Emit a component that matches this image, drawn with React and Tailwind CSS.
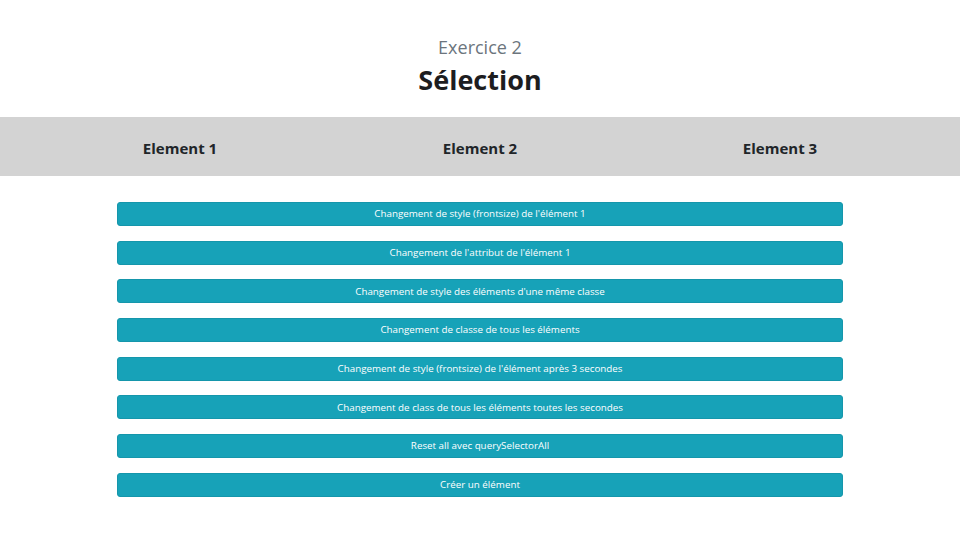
export default function App() {
  const actions = [
    "Changement de style (frontsize) de l'élément 1",
    "Changement de l'attribut de l'élément 1",
    "Changement de style des éléments d'une même classe",
    "Changement de classe de tous les éléments",
    "Changement de style (frontsize) de l'élément après 3 secondes",
    "Changement de class de tous les éléments toutes les secondes",
    "Reset all avec querySelectorAll",
    "Créer un élément",
  ];

  return (
    <div className="min-h-[539px] bg-white font-['Open_Sans',sans-serif] text-[#212529]">
      {/* Titre */}
      <div className="flex flex-col items-center pt-[35px] pb-[18px]">
        <h2 className="text-[18px] leading-[24px] font-medium text-[#6c757d]">Exercice 2</h2>
        <h1 className="text-[27px] leading-[38px] pt-[2px] font-bold text-[#1d1d1f]">Sélection</h1>
      </div>

      {/* Elements */}
      <div className="grid grid-cols-3 bg-[#d3d3d3] h-[59px] items-center px-[30px] pt-[4px]">
        <p className="text-center text-[15px] font-bold">Element 1</p>
        <p className="text-center text-[15px] font-bold">Element 2</p>
        <p className="text-center text-[15px] font-bold">Element 3</p>
      </div>

      {/* Boutons */}
      <div className="flex flex-col gap-[14.7px] mx-[117px] mt-[26px]">
        {actions.map((a) => (
          <button
            key={a}
            className="h-[24px] w-full rounded-[3px] border border-[#1596ab] bg-[#17a2b8] pt-[1px] text-[9.8px] text-white"
          >
            {a}
          </button>
        ))}
      </div>
    </div>
  );
}
